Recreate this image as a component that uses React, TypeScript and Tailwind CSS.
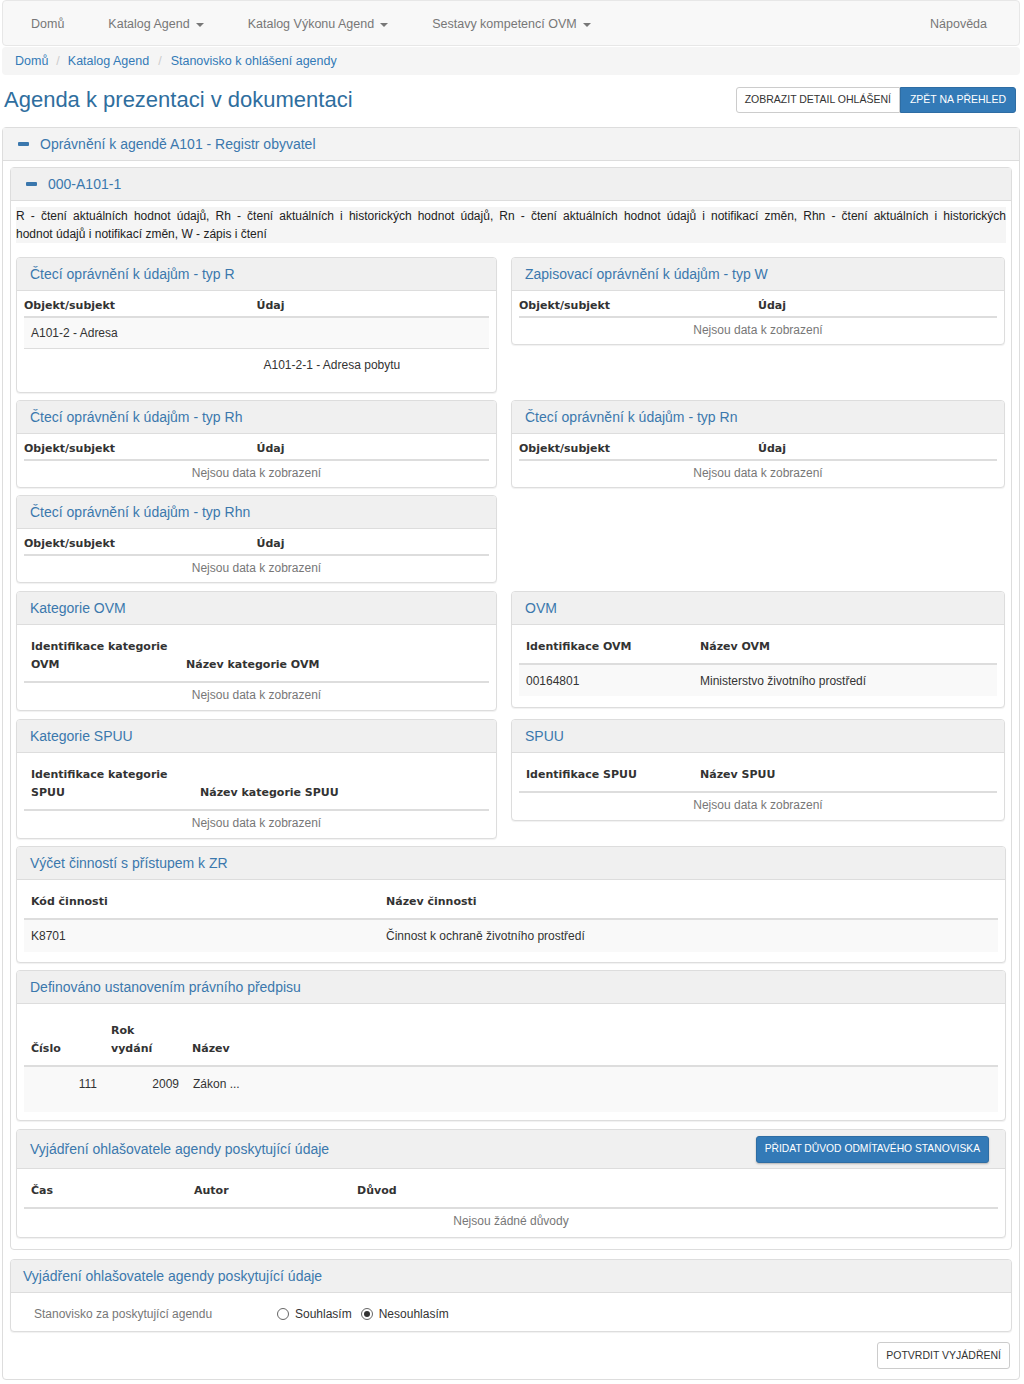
import type { ReactNode } from "react";

const TH = "font-['DejaVu_Sans'] font-bold text-[11px] text-[#333333]";

function Caret() {
    return <span className="ml-[6px] inline-block h-0 w-0 border-x-[4px] border-t-[4px] border-x-transparent border-t-[#777777] align-middle" />;
}

function Minus() {
    return <span className="mr-[11px] inline-block h-[4px] w-[11px] rounded-[1px] bg-[#3a77ad]" />;
}

function Panel({ title, children, action, tall }: { title: ReactNode; children: ReactNode; action?: ReactNode; tall?: boolean }) {
    return (
        <div className="overflow-hidden rounded-[4px] border border-[#dddddd] bg-white shadow-[0_1px_1px_rgba(0,0,0,0.06)]">
            <div
                className={`flex items-center justify-between border-b border-[#dddddd] bg-[#f0f0f0] pl-[13px] pr-[16px] text-[14px] text-[#3b78ad] ${tall ? "h-[39px]" : "h-[33px]"}`}
            >
                <span>{title}</span>
                {action}
            </div>
            {children}
        </div>
    );
}

function Empty({ text = "Nejsou data k zobrazení" }: { text?: string }) {
    return <div className="flex h-[24px] items-center justify-center text-[12px] text-[#777777]">{text}</div>;
}

// permission tables: plain header row, two equal columns
function PermPanel({ title, rows }: { title: string; rows?: boolean }) {
    return (
        <Panel title={title}>
            <div className={`px-[7px] pt-[7px] ${rows ? "pb-[11px]" : "pb-[2px]"}`}>
                <div className={`flex h-[20px] border-b-2 border-[#dddddd] leading-[16px] ${TH}`}>
                    <div className="w-1/2">Objekt/subjekt</div>
                    <div className="w-1/2">Údaj</div>
                </div>
                {rows ? (
                    <>
                        <div className="flex h-[31px] items-center border-b border-[#dddddd] bg-[#f9f9f9] pl-[7px] text-[12px] text-[#333333]">
                            A101-2 - Adresa
                        </div>
                        <div className="flex h-[32px] items-center text-[12px] text-[#333333]">
                            <div className="w-1/2" />
                            <div className="w-1/2 pl-[7px]">A101-2-1 - Adresa pobytu</div>
                        </div>
                    </>
                ) : (
                    <Empty />
                )}
            </div>
        </Panel>
    );
}

function HeadRow({ cols, pt = "pt-[6px]" }: { cols: { w: string; label: ReactNode }[]; pt?: string }) {
    return (
        <div className={`flex items-end border-b-2 border-[#dddddd] pb-[7px] leading-[18px] ${pt} ${TH}`}>
            {cols.map((c, i) => (
                <div key={i} className={`${c.w} pl-[7px]`}>
                    {c.label}
                </div>
            ))}
        </div>
    );
}

export default function App() {
    return (
        <div className="w-[1024px] bg-white pb-[6px] pl-[2px] pr-[4px] font-['Liberation_Sans',Arial,sans-serif] text-[#333333]">
            {/* Navbar */}
            <div className="flex h-[46px] items-center justify-between rounded-[4px] border border-[#e7e7e7] bg-[#f8f8f8] pt-[3px] text-[12.5px] text-[#777777]">
                <div className="ml-[6px] flex items-center">
                    <span className="px-[22px]">Domů</span>
                    <span className="px-[22px]">
                        Katalog Agend
                        <Caret />
                    </span>
                    <span className="px-[22px]">
                        Katalog Výkonu Agend
                        <Caret />
                    </span>
                    <span className="px-[22px]">
                        Sestavy kompetencí OVM
                        <Caret />
                    </span>
                </div>
                <span className="mr-[10px] px-[22px]">Nápověda</span>
            </div>

            {/* Breadcrumb */}
            <div className="mt-[1px] flex h-[28px] items-center rounded-[4px] bg-[#f5f5f5] pl-[13px] text-[12.5px] text-[#337ab7]">
                <span>Domů</span>
                <span className="px-[8px] text-[#cccccc]">/</span>
                <span>Katalog Agend</span>
                <span className="px-[9px] text-[#cccccc]">/</span>
                <span>Stanovisko k ohlášení agendy</span>
            </div>

            {/* Title row */}
            <div className="mb-[14px] mt-[12px] flex items-center justify-between pl-[2px] pr-[4px]">
                <h1 className="text-[22px] leading-[26px] text-[#2f6e9e]">Agenda k prezentaci v dokumentaci</h1>
                <div className="flex">
                    <button className="h-[26px] rounded-l-[3px] border border-[#cccccc] bg-white px-[8px] text-[10.5px] text-[#333333]">
                        ZOBRAZIT DETAIL OHLÁŠENÍ
                    </button>
                    <button className="h-[26px] rounded-r-[3px] border border-[#2e6da4] bg-[#337ab7] px-[9px] text-[10.5px] text-white">
                        ZPĚT NA PŘEHLED
                    </button>
                </div>
            </div>

            {/* Outer panel */}
            <div className="rounded-[4px] border border-[#dddddd] bg-white">
                <div className="flex h-[33px] items-center border-b border-[#dddddd] bg-[#f3f3f3] pl-[15px] text-[14px] text-[#3b78ad]">
                    <Minus />
                    Oprávnění k agendě A101 - Registr obyvatel
                </div>
                <div className="px-[7px] pb-[10px] pt-[6px]">
                    {/* Inner panel */}
                    <div className="rounded-[4px] border border-[#dddddd] bg-white">
                        <div className="flex h-[33px] items-center border-b border-[#dddddd] bg-[#f0f0f0] pl-[15px] text-[14px] text-[#3b78ad]">
                            <Minus />
                            000-A101-1
                        </div>
                        <div className="px-[5px] pb-[11px] pt-[6px]">
                            <div className="bg-[#f5f5f5] text-[12px] leading-[18px] text-[#222222]">
                                <span className="block text-justify [text-align-last:justify]">
                                    R - čtení aktuálních hodnot údajů, Rh - čtení aktuálních i historických hodnot údajů, Rn - čtení aktuálních hodnot údajů i notifikací změn, Rhn - čtení aktuálních i historických
                                </span>
                                <span className="block">hodnot údajů i notifikací změn, W - zápis i čtení</span>
                            </div>

                            <div className="mt-[14px] flex flex-col gap-[7px]">
                                <div className="flex items-start gap-[14px]">
                                    <div className="w-[481px]">
                                        <PermPanel title="Čtecí oprávnění k údajům - typ R" rows />
                                    </div>
                                    <div className="w-[494px]">
                                        <PermPanel title="Zapisovací oprávnění k údajům - typ W" />
                                    </div>
                                </div>
                                <div className="flex items-start gap-[14px]">
                                    <div className="w-[481px]">
                                        <PermPanel title="Čtecí oprávnění k údajům - typ Rh" />
                                    </div>
                                    <div className="w-[494px]">
                                        <PermPanel title="Čtecí oprávnění k údajům - typ Rn" />
                                    </div>
                                </div>
                                <div className="flex items-start gap-[14px]">
                                    <div className="w-[481px]">
                                        <PermPanel title="Čtecí oprávnění k údajům - typ Rhn" />
                                    </div>
                                </div>

                                <div className="mt-[1px] flex items-start gap-[14px]">
                                    <div className="w-[481px]">
                                        <Panel title="Kategorie OVM">
                                            <div className="px-[7px] pb-[3px] pt-[7px]">
                                                <HeadRow
                                                    cols={[
                                                        { w: "w-[155px]", label: <>Identifikace kategorie<br />OVM</> },
                                                        { w: "flex-1", label: "Název kategorie OVM" },
                                                    ]}
                                                />
                                                <Empty />
                                            </div>
                                        </Panel>
                                    </div>
                                    <div className="w-[494px]">
                                        <Panel title="OVM">
                                            <div className="px-[7px] pb-[11px] pt-[7px]">
                                                <HeadRow
                                                    cols={[
                                                        { w: "w-[174px]", label: "Identifikace OVM" },
                                                        { w: "flex-1", label: "Název OVM" },
                                                    ]}
                                                />
                                                <div className="flex h-[31px] items-center bg-[#f9f9f9] text-[12px] text-[#333333]">
                                                    <div className="w-[174px] pl-[7px]">00164801</div>
                                                    <div className="flex-1 pl-[7px]">Ministerstvo životního prostředí</div>
                                                </div>
                                            </div>
                                        </Panel>
                                    </div>
                                </div>

                                <div className="mt-[1px] flex items-start gap-[14px]">
                                    <div className="w-[481px]">
                                        <Panel title="Kategorie SPUU">
                                            <div className="px-[7px] pb-[3px] pt-[7px]">
                                                <HeadRow
                                                    cols={[
                                                        { w: "w-[169px]", label: <>Identifikace kategorie<br />SPUU</> },
                                                        { w: "flex-1", label: "Název kategorie SPUU" },
                                                    ]}
                                                />
                                                <Empty />
                                            </div>
                                        </Panel>
                                    </div>
                                    <div className="w-[494px]">
                                        <Panel title="SPUU">
                                            <div className="px-[7px] pb-[3px] pt-[7px]">
                                                <HeadRow
                                                    cols={[
                                                        { w: "w-[174px]", label: "Identifikace SPUU" },
                                                        { w: "flex-1", label: "Název SPUU" },
                                                    ]}
                                                />
                                                <Empty />
                                            </div>
                                        </Panel>
                                    </div>
                                </div>

                                <Panel title="Výčet činností s přístupem k ZR">
                                    <div className="px-[7px] pb-[10px] pt-[7px]">
                                        <HeadRow
                                            cols={[
                                                { w: "w-[355px]", label: "Kód činnosti" },
                                                { w: "flex-1", label: "Název činnosti" },
                                            ]}
                                        />
                                        <div className="flex h-[32px] items-center bg-[#f9f9f9] text-[12px] text-[#333333]">
                                            <div className="w-[355px] pl-[7px]">K8701</div>
                                            <div className="flex-1 pl-[7px]">Činnost k ochraně životního prostředí</div>
                                        </div>
                                    </div>
                                </Panel>

                                <Panel title="Definováno ustanovením právního předpisu">
                                    <div className="px-[7px] pb-[8px] pt-[7px]">
                                        <HeadRow
                                            pt="pt-[11px]"
                                            cols={[
                                                { w: "w-[80px]", label: "Číslo" },
                                                { w: "w-[81px]", label: <>Rok<br />vydání</> },
                                                { w: "flex-1", label: "Název" },
                                            ]}
                                        />
                                        <div className="flex h-[45px] bg-[#f9f9f9] pt-[8px] text-[12px] leading-[18px] text-[#333333]">
                                            <div className="w-[80px] pr-[7px] text-right">111</div>
                                            <div className="w-[81px] pr-[6px] text-right">2009</div>
                                            <div className="flex-1 pl-[8px]">Zákon ...</div>
                                        </div>
                                    </div>
                                </Panel>

                                <div className="mt-[1px]">
                                    <Panel
                                        title="Vyjádření ohlašovatele agendy poskytující údaje"
                                        tall
                                        action={
                                            <button className="h-[27px] rounded-[3px] border border-[#2e6da4] bg-[#337ab7] px-[8px] text-[10.3px] text-white shadow-[0_1px_2px_rgba(0,0,0,0.25)]">
                                                PŘIDAT DŮVOD ODMÍTAVÉHO STANOVISKA
                                            </button>
                                        }
                                    >
                                        <div className="px-[7px] pb-[4px] pt-[7px]">
                                            <HeadRow
                                                cols={[
                                                    { w: "w-[163px]", label: "Čas" },
                                                    { w: "w-[163px]", label: "Autor" },
                                                    { w: "flex-1", label: "Důvod" },
                                                ]}
                                            />
                                            <Empty text="Nejsou žádné důvody" />
                                        </div>
                                    </Panel>
                                </div>
                            </div>
                        </div>
                    </div>

                    {/* Statement panel */}
                    <div className="mt-[9px] overflow-hidden rounded-[4px] border border-[#dddddd] bg-white shadow-[0_1px_1px_rgba(0,0,0,0.06)]">
                        <div className="flex h-[33px] items-center border-b border-[#dddddd] bg-[#f0f0f0] pl-[12px] text-[14px] text-[#3b78ad]">
                            Vyjádření ohlašovatele agendy poskytující údaje
                        </div>
                        <div className="flex h-[38px] items-center pl-[23px] pt-[4px] text-[12px]">
                            <span className="w-[243px] text-[#777777]">Stanovisko za poskytující agendu</span>
                            <label className="flex items-center text-[#333333]">
                                <span className="mr-[6px] inline-block h-[12px] w-[12px] rounded-full border border-[#666666] bg-white" />
                                Souhlasím
                            </label>
                            <label className="ml-[9px] flex items-center text-[#333333]">
                                <span className="mr-[6px] flex h-[12px] w-[12px] items-center justify-center rounded-full border border-[#666666] bg-white">
                                    <span className="h-[6px] w-[6px] rounded-full bg-[#333333]" />
                                </span>
                                Nesouhlasím
                            </label>
                        </div>
                    </div>

                    <div className="mt-[10px] flex justify-end pr-[2px]">
                        <button className="h-[27px] rounded-[3px] border border-[#cccccc] bg-white px-[8px] text-[10.5px] text-[#333333]">
                            POTVRDIT VYJÁDŘENÍ
                        </button>
                    </div>
                </div>
            </div>
        </div>
    );
}
